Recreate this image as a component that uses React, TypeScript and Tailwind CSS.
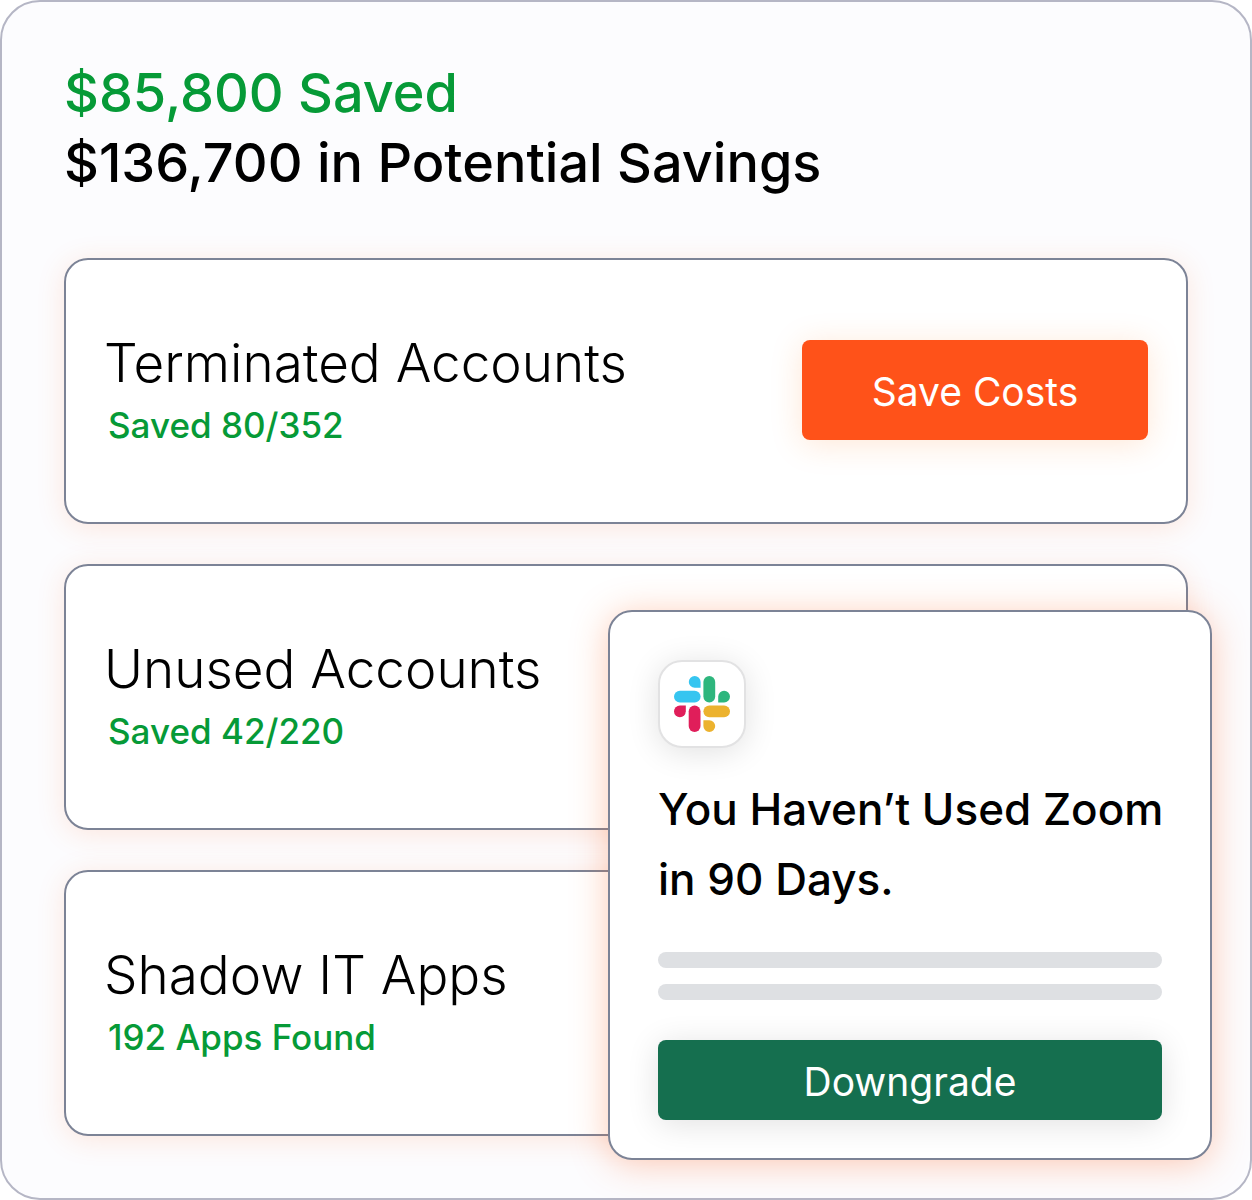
import clsx from "clsx";

const accounts = [
  { title: "Terminated Accounts", detail: "Saved 80/352", action: "Save Costs" },
  { title: "Unused Accounts", detail: "Saved 42/220" },
  { title: "Shadow IT Apps", detail: "192 Apps Found" },
];

const SlackLogo = () => (
  <svg viewBox="0 0 56 56" className="size-14" aria-label="Slack" role="img">
    <g fill="#36c5f0">
      <path d="M20.7 0a5.9 5.9 0 0 0 0 11.8h5.9V5.9A5.9 5.9 0 0 0 20.7 0Z" />
      <rect x="0" y="14.7" width="26.6" height="11.8" rx="5.9" />
    </g>
    <g fill="#2eb67d">
      <rect x="29.4" y="0" width="11.8" height="26.5" rx="5.9" />
      <path d="M56 20.6a5.9 5.9 0 0 0-11.8 0v5.9h5.9a5.9 5.9 0 0 0 5.9-5.9Z" />
    </g>
    <g fill="#ecb22e">
      <rect x="29.4" y="29.4" width="26.6" height="11.8" rx="5.9" />
      <path d="M35.3 56a5.9 5.9 0 0 0 0-11.8h-5.9v5.9a5.9 5.9 0 0 0 5.9 5.9Z" />
    </g>
    <g fill="#e01e5a">
      <path d="M0 35.3a5.9 5.9 0 0 0 11.8 0v-5.9H5.9A5.9 5.9 0 0 0 0 35.3Z" />
      <rect x="14.7" y="29.4" width="11.8" height="26.6" rx="5.9" />
    </g>
  </svg>
);

interface AccountCardProps {
  title: string;
  detail: string;
  action?: string;
}

const AccountCard = ({ title, detail, action }: AccountCardProps) => (
  <li className="flex min-h-[266px] items-center justify-between rounded-3xl border-2 border-[#7c8396] bg-white px-[38px] pb-0.5 shadow-[0_4px_28px_rgba(255,110,40,0.15)]">
    <div>
      <h2 className="text-[53px] leading-[70px] font-light">{title}</h2>
      <p className="pl-1 text-[35px] leading-[54px] font-medium text-[#069a37]">
        {detail}
      </p>
    </div>
    {action && (
      <button
        type="button"
        className="h-[100px] w-[346px] rounded-lg bg-[#ff5219] pt-1 text-[39px] text-white shadow-[0_4px_32px_rgba(255,122,25,0.18)]"
      >
        {action}
      </button>
    )}
  </li>
);

const UsageAlert = ({ className }: { className?: string }) => (
  <aside
    className={clsx(
      "rounded-3xl border-2 border-[#7c8396] bg-white px-12 pt-12 pb-[38px] shadow-[0_4px_36px_rgba(255,105,40,0.34)]",
      className,
    )}
  >
    <div className="flex size-[88px] items-center justify-center rounded-3xl border-2 border-[#e2e2e3] bg-white shadow-[0_4px_32px_rgba(0,0,0,0.12)]">
      <SlackLogo />
    </div>
    <h2 className="mt-[26px] text-[44px] leading-[70px] font-medium whitespace-nowrap">
      You Haven’t Used Zoom
      <br />
      in 90 Days.
    </h2>
    <div className="mt-[38px] flex flex-col gap-4">
      <div className="h-4 rounded-full bg-[#dee0e3]" />
      <div className="h-4 rounded-full bg-[#dee0e3]" />
    </div>
    <button
      type="button"
      className="mt-10 h-20 w-full rounded-lg bg-[#156f4f] pt-1 text-[39px] text-white shadow-[0_4px_32px_rgba(0,0,0,0.12)]"
    >
      Downgrade
    </button>
  </aside>
);

export default function App() {
  return (
    <main className="relative min-h-screen rounded-[40px] border-2 border-[#b5b6c5] bg-[#fcfcfe] px-[62px] pt-14 pb-[62px] font-['Inter','Liberation_Sans',sans-serif] text-black">
      <h1 className="text-[54px] leading-[70px] font-medium">
        <span className="block text-[#069a37]">$85,800 Saved</span>
        $136,700 in Potential Savings
      </h1>
      <ul className="mt-[60px] flex flex-col gap-10">
        {accounts.map((account) => (
          <AccountCard key={account.title} {...account} />
        ))}
      </ul>
      <UsageAlert className="absolute right-[38px] bottom-[38px] w-[604px]" />
    </main>
  );
}
